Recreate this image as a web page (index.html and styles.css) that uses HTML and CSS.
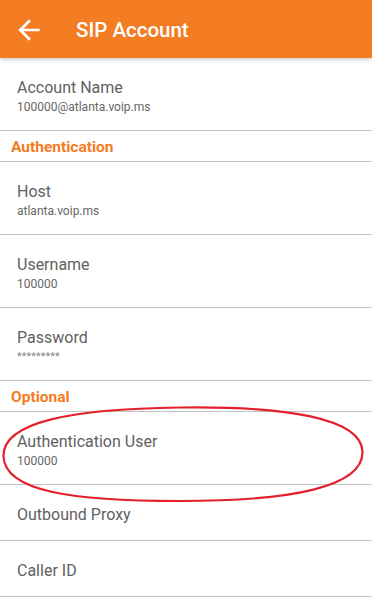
FILE: index.html
```html
<!DOCTYPE html>
<html lang="en">
<head>
    <meta charset="UTF-8">
    <meta name="viewport" content="width=device-width, initial-scale=1.0">
    <title>SIP Account</title>
    <link rel="stylesheet" href="styles.css">
</head>
<body>

<header class="toolbar">
    <svg class="back" viewBox="0 0 24 24" width="32" height="32">
        <path d="M20 11H7.83l5.59-5.59L12 4l-8 8 8 8 1.41-1.41L7.83 13H20v-2z" fill="#ffffff"/>
    </svg>
    <h1>SIP Account</h1>
</header>

<div class="prefs">
    <div class="pref">
        <div class="pref-title">Account Name</div>
        <div class="pref-summary">100000@atlanta.voip.ms</div>
    </div>

    <div class="category">Authentication</div>

    <div class="pref">
        <div class="pref-title">Host</div>
        <div class="pref-summary">atlanta.voip.ms</div>
    </div>
    <div class="pref">
        <div class="pref-title">Username</div>
        <div class="pref-summary">100000</div>
    </div>
    <div class="pref">
        <div class="pref-title">Password</div>
        <div class="pref-summary stars">*********</div>
    </div>

    <div class="category">Optional</div>

    <div class="pref">
        <div class="pref-title">Authentication User</div>
        <div class="pref-summary">100000</div>
    </div>
    <div class="pref">
        <div class="pref-title">Outbound Proxy</div>
    </div>
    <div class="pref">
        <div class="pref-title">Caller ID</div>
    </div>
</div>

<!-- hand drawn highlight over the Authentication User row -->
<svg class="mark" width="372" height="599" viewBox="0 0 372 599">
    <path d="M180 407.5 C285 406 362 418 362.5 452 C363 487 292 501 180 501 C75 501 4 492 3.5 456 C3 422 70 409 180 407.5 Z"
          fill="none" stroke="#e3202b" stroke-width="2.2"/>
</svg>

</body>
</html>
```

FILE: styles.css
```css
body {
    font-family: Roboto, 'Noto Sans', sans-serif;
    margin: 0;
    padding: 0;
    background-color: #ffffff;
    width: 372px;
    height: 599px;
    overflow: hidden;
    position: relative;
}
.toolbar {
    height: 58px;
    background-color: #f47c22;
    display: flex;
    align-items: center;
    box-shadow: 0 2px 4px rgba(0,0,0,0.18);
    position: relative;
    z-index: 1;
}
.back {
    margin-left: 13px;
    margin-top: 2px;
}
.toolbar h1 {
    margin: 0 0 0 31px;
    font-size: 20.5px;
    font-weight: 500;
    color: #ffffff;
    padding-top: 2px;
}
.pref {
    padding: 20px 17px 15px;
    border-bottom: 1px solid #c4c4c4;
}
.pref-title {
    font-size: 16px;
    line-height: 20px;
    color: #616161;
}
.pref-summary {
    font-size: 12px;
    line-height: 16px;
    margin-top: 1px;
    color: #666666;
}
.stars {
    font-size: 11px;
    letter-spacing: 0;
    color: #888888;
}
.category {
    height: 31px;
    line-height: 30px;
    padding: 1px 0 0 11px;
    box-sizing: border-box;
    font-size: 15.5px;
    font-weight: bold;
    color: #f47c22;
    border-bottom: 1px solid #c4c4c4;
}
.mark {
    position: absolute;
    left: 0;
    top: 0;
    pointer-events: none;
    z-index: 2;
}
```
